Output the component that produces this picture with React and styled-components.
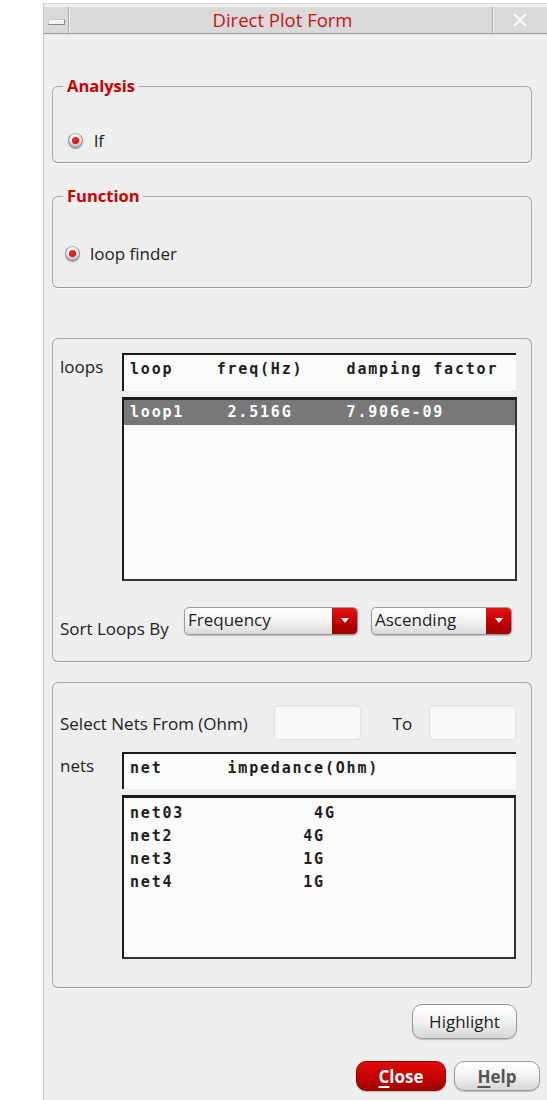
import React from "react";
import styled, { createGlobalStyle } from "styled-components";

const GlobalStyle = createGlobalStyle`
  body {
    margin: 0;
    background: #ffffff;
    font-family: "Open Sans", "DejaVu Sans", sans-serif;
  }
`;

const Page = styled.div`
  padding: 3px 0 0 43px;
`;

const Window = styled.div`
  width: 503px;
  min-height: 1096px;
  background: #eeeeee;
  border-top: 1px solid #d4d6dc;
  border-left: 1px solid #c9c9c9;
`;

const TitleBar = styled.div`
  display: flex;
  height: 26px;
  margin-top: 3px;
  background: #d9d9d9;
  border-bottom: 1px solid #9c9c9c;
  box-shadow: 0 1px 0 #e4e4e4;
`;

const TitleButton = styled.div`
  display: flex;
  align-items: center;
  justify-content: center;
  width: ${(p) => p.$width}px;
  border-left: ${(p) => (p.$right ? "1px solid #a8a8a8" : "none")};
  border-right: ${(p) => (p.$right ? "none" : "1px solid #a8a8a8")};
  box-shadow: ${(p) =>
    p.$right ? "inset 1px 0 0 #f2f2f2" : "1px 0 0 #f2f2f2"};
`;

const MinBar = styled.div`
  width: 15px;
  height: 4px;
  margin-top: 3px;
  background: #f4f4f4;
  border: 1px solid #8a8a8a;
  border-top-color: #c8c8c8;
  border-left-color: #c8c8c8;
`;

const Title = styled.div`
  flex: 1;
  text-align: center;
  color: #cc1111;
  font-size: 18.5px;
  line-height: 26px;
  margin-left: 4px;
`;

const Body = styled.div`
  padding: 0 15px 0 8px;
`;

const Group = styled.div`
  position: relative;
  margin-top: ${(p) => p.$gap}px;
  height: ${(p) => p.$h}px;
  box-sizing: border-box;
  border: 1px solid #aaaaaa;
  border-bottom-color: #9a9a9a;
  border-radius: 6px;
  box-shadow: 0 1px 0 #fafafa;
  padding: ${(p) => p.$pad};
`;

const Legend = styled.span`
  position: absolute;
  top: -12px;
  left: 10px;
  padding: 0 3px 0 4px;
  background: #eeeeee;
  color: #cc0000;
  font-weight: bold;
  font-size: 16.5px;
  line-height: 22px;
`;

const RadioRow = styled.label`
  display: flex;
  align-items: center;
  gap: ${(p) => p.$gap}px;
  height: 22px;
  font-size: 17px;
  color: #222;
`;

const RadioDot = styled.span`
  position: relative;
  width: 15px;
  height: 15px;
  box-sizing: border-box;
  border-radius: 50%;
  border: 1px solid #8e8e8e;
  border-top-color: #b4b4b4;
  background: linear-gradient(#ffffff, #ececec 50%, #b8b8b8);
  box-shadow: 0 1px 1px #9a9a9a;
  &::after {
    content: "";
    position: absolute;
    left: 3px;
    top: 3px;
    width: 7px;
    height: 7px;
    border-radius: 50%;
    background: radial-gradient(circle at 40% 35%, #ff2a2a, #c40000);
  }
`;

const ListGrid = styled.div`
  display: grid;
  grid-template-columns: 62px 1fr;
  row-gap: ${(p) => p.$rowGap}px;
  margin-top: ${(p) => p.$mt || 0}px;
`;

const SideLabel = styled.div`
  font-size: 17px;
  line-height: 22px;
  color: #222;
  padding-top: 3px;
`;

const HeaderBox = styled.div`
  height: ${(p) => p.$h}px;
  box-sizing: border-box;
  background: #fbfbfb;
  border-top: 2px solid #1a1a1a;
  border-left: 2px solid #1a1a1a;
  padding-top: 4px;
`;

const DataBox = styled.div`
  grid-column: 2;
  height: ${(p) => p.$h}px;
  box-sizing: border-box;
  background: #fbfbfb;
  border: 2px solid #1a1a1a;
  border-top-width: 3px;
  border-right-color: #333;
  border-bottom-color: #333;
  padding-top: ${(p) => p.$padTop}px;
  margin-right: ${(p) => p.$mr || 0}px;
`;

const Mono = styled.div`
  font-family: "DejaVu Sans Mono", "Liberation Mono", monospace;
  font-weight: bold;
  font-size: 15px;
  letter-spacing: 1.8px;
  white-space: pre;
  line-height: ${(p) => p.$lh || 20}px;
  height: ${(p) => p.$lh || 20}px;
  padding-left: 6px;
  color: ${(p) => (p.$selected ? "#ffffff" : "#1e1e1e")};
  background: ${(p) => (p.$selected ? "#787878" : "transparent")};
`;

const SortRow = styled.div`
  display: flex;
  align-items: flex-start;
  margin-top: 26px;
`;

const RowLabel = styled.div`
  font-size: 17px;
  line-height: 23px;
  color: #222;
  width: ${(p) => p.$w}px;
  padding-top: ${(p) => p.$pt || 0}px;
  margin-left: ${(p) => p.$ml || 0}px;
`;

const Combo = styled.div`
  display: flex;
  width: ${(p) => p.$w}px;
  height: 28px;
  box-sizing: border-box;
  margin-left: ${(p) => p.$ml || 0}px;
  border: 1px solid #9a9a9a;
  border-radius: 5px;
  overflow: hidden;
  background: linear-gradient(#ffffff, #f3f3f3 50%, #d9d9d9);
  box-shadow: 0 1px 1px #bbb;
`;

const ComboText = styled.div`
  flex: 1;
  font-size: 17px;
  line-height: 24px;
  padding-left: 3px;
  color: #1e1e1e;
`;

const ComboArrow = styled.div`
  display: flex;
  align-items: center;
  justify-content: center;
  width: 25px;
  background: linear-gradient(#e41414, #c00000 55%, #9c0000);
  &::after {
    content: "";
    border-left: 4px solid transparent;
    border-right: 4px solid transparent;
    border-top: 5px solid #ffffff;
    margin-top: -2px;
  }
`;

const NetsTop = styled.div`
  display: flex;
  align-items: center;
`;

const FieldBox = styled.div`
  width: 87px;
  height: 35px;
  box-sizing: border-box;
  background: #f9f9f9;
  border: 1px solid #e1e1e1;
  border-radius: 4px;
  box-shadow: inset 0 1px 1px #e8e8e8;
`;

const Actions = styled.div`
  display: flex;
  justify-content: flex-end;
  gap: 8px;
  margin-top: ${(p) => p.$gap}px;
  margin-right: ${(p) => p.$mr}px;
`;

const Button = styled.div`
  width: ${(p) => p.$w}px;
  height: ${(p) => p.$h}px;
  box-sizing: border-box;
  display: flex;
  align-items: center;
  justify-content: center;
  border-radius: 10px;
  font-size: 17px;
  border: 1px solid ${(p) => (p.$red ? "#8e0000" : "#9a9a9a")};
  color: ${(p) => (p.$red ? "#ffffff" : p.$muted ? "#555" : "#1e1e1e")};
  font-weight: ${(p) => (p.$red || p.$muted ? "bold" : "normal")};
  background: ${(p) =>
    p.$red
      ? "linear-gradient(#e00c0c, #c40000 55%, #a00000)"
      : "linear-gradient(#ffffff, #f2f2f2 50%, #d6d6d6)"};
  box-shadow: 0 1px 1px #bbb;
  & u {
    text-decoration-thickness: 2px;
    text-underline-offset: 3px;
  }
`;

const CloseIcon = () => (
  <svg width="18" height="18" viewBox="0 0 18 18">
    <path
      d="M3 3 L15 15 M15 3 L3 15"
      stroke="#cdcdcd"
      strokeWidth="5"
      strokeDasharray="2 1"
      fill="none"
    />
    <path
      d="M3 3 L15 15 M15 3 L3 15"
      stroke="#f6f6f6"
      strokeWidth="3"
      fill="none"
    />
  </svg>
);

const nets = [
  "net03            4G",
  "net2            4G",
  "net3            1G",
  "net4            1G",
];

const App = () => {
  return (
    <Page>
      <GlobalStyle />
      <Window>
        <TitleBar>
          <TitleButton $width={24}>
            <MinBar />
          </TitleButton>
          <Title>Direct Plot Form</Title>
          <TitleButton $width={54} $right>
            <CloseIcon />
          </TitleButton>
        </TitleBar>

        <Body>
          <Group $gap={52} $h={77} $pad="42px 0 0 15px">
            <Legend>Analysis</Legend>
            <RadioRow $gap={11}>
              <RadioDot /> lf
            </RadioRow>
          </Group>

          <Group $gap={33} $h={92} $pad="45px 0 0 12px">
            <Legend>Function</Legend>
            <RadioRow $gap={10}>
              <RadioDot /> loop finder
            </RadioRow>
          </Group>

          <Group $gap={50} $h={324} $pad="14px 15px 0 7px">
            <ListGrid $rowGap={6}>
              <SideLabel>loops</SideLabel>
              <HeaderBox $h={38}>
                <Mono>{"loop    freq(Hz)    damping factor"}</Mono>
              </HeaderBox>
              <DataBox $h={184} $padTop={0} $mr={-1}>
                <Mono $selected $lh={25}>
                  {"loop1    2.516G     7.906e-09"}
                </Mono>
              </DataBox>
            </ListGrid>
            <SortRow>
              <RowLabel $w={124} $pt={10}>
                Sort Loops By
              </RowLabel>
              <Combo $w={174}>
                <ComboText>Frequency</ComboText>
                <ComboArrow />
              </Combo>
              <Combo $w={141} $ml={13}>
                <ComboText>Ascending</ComboText>
                <ComboArrow />
              </Combo>
            </SortRow>
          </Group>

          <Group $gap={20} $h={306} $pad="22px 15px 0 7px">
            <NetsTop>
              <RowLabel $w={215} $pt={2}>
                Select Nets From (Ohm)
              </RowLabel>
              <FieldBox />
              <RowLabel $w={37} $ml={32} $pt={2}>
                To
              </RowLabel>
              <FieldBox />
            </NetsTop>
            <ListGrid $rowGap={6} $mt={12}>
              <SideLabel>nets</SideLabel>
              <HeaderBox $h={37}>
                <Mono>{"net      impedance(Ohm)"}</Mono>
              </HeaderBox>
              <DataBox $h={164} $padTop={4}>
                {nets.map((n) => (
                  <Mono key={n} $lh={23}>
                    {n}
                  </Mono>
                ))}
              </DataBox>
            </ListGrid>
          </Group>

          <Actions $gap={16} $mr={15}>
            <Button $w={105} $h={35}>
              Highlight
            </Button>
          </Actions>
          <Actions $gap={22} $mr={-8}>
            <Button $w={90} $h={30} $red>
              <span>
                <u>C</u>lose
              </span>
            </Button>
            <Button $w={86} $h={30} $muted>
              <span>
                <u>H</u>elp
              </span>
            </Button>
          </Actions>
        </Body>
      </Window>
    </Page>
  );
};

export default App;
